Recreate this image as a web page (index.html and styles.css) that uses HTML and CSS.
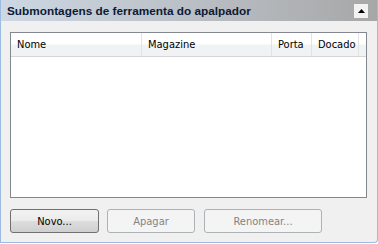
FILE: index.html
```html
<!DOCTYPE html>
<html lang="pt">
<head>
    <meta charset="UTF-8">
    <title>Submontagens de ferramenta do apalpador</title>
    <link rel="stylesheet" href="styles.css">
</head>
<body>
    <div class="panel">
        <div class="panel-head">
            <span class="panel-title">Submontagens de ferramenta do apalpador</span>
            <span class="collapse-btn">
                <svg width="7" height="4" viewBox="0 0 7 4"><polygon points="0,4 7,4 3.5,0" fill="#000"/></svg>
            </span>
        </div>
        <div class="panel-body">
            <div class="listbox">
                <div class="list-head">
                    <div class="col col-nome">Nome</div>
                    <div class="col col-mag">Magazine</div>
                    <div class="col col-porta">Porta</div>
                    <div class="col col-doc">Docado</div>
                </div>
                <div class="list-rows">
                    <!-- sem subconjuntos -->
                </div>
            </div>
            <div class="actions">
                <button class="btn btn-novo">Novo...</button>
                <button class="btn btn-apagar" disabled>Apagar</button>
                <button class="btn btn-renomear" disabled>Renomear...</button>
            </div>
        </div>
    </div>
</body>
</html>
```

FILE: styles.css
```css
body {
    margin: 0;
    width: 378px;
    height: 244px;
    background: #ffffff;
    font-family: "DejaVu Sans Condensed", "DejaVu Sans", Arial, sans-serif;
    font-size: 11px;
}
.panel {
    width: 376px;
    height: 242px;
    border-left: 1px solid #9bbbe0;
    border-right: 1px solid #9bbbe0;
    border-bottom: 1px solid #9bbbe0;
    border-bottom-right-radius: 4px;
    background: #f0f0f0;
    display: flex;
    flex-direction: column;
}
.panel-head {
    height: 21px;
    display: flex;
    align-items: center;
    justify-content: space-between;
    padding: 0 9px 0 6px;
    background: linear-gradient(to right, #cdd8e4 0%, #bcc2c9 45%, #a7a7a7 100%);
}
.panel-title {
    font-family: "Liberation Sans", Arial, sans-serif;
    font-weight: bold;
    font-size: 11.8px;
    color: #0d1a35;
}
.collapse-btn {
    width: 14px;
    height: 14px;
    background: #f2f2f2;
    display: flex;
    align-items: center;
    justify-content: center;
}
.panel-body {
    flex: 1;
    padding: 11px 10px 9px 9px;
    display: flex;
    flex-direction: column;
}
.listbox {
    height: 164px;
    border: 1px solid #828790;
    background: #ffffff;
    display: flex;
    flex-direction: column;
}
.list-head {
    height: 23px;
    display: flex;
    background: linear-gradient(#ffffff 0%, #ffffff 45%, #f1f2f4 55%, #f1f2f4 100%);
    border-bottom: 1px solid #d5d5d5;
}
.col {
    display: flex;
    align-items: center;
    padding-left: 6px;
    border-right: 1px solid #e2e3e4;
    color: #000;
}
.col-nome { width: 124px; }
.col-mag { width: 123px; }
.col-porta { width: 33px; }
.col-doc { width: 40px; }
.list-rows {
    flex: 1;
}
.actions {
    margin-top: 11px;
    display: flex;
    gap: 9px;
}
.btn {
    height: 24px;
    border: 1px solid #707070;
    border-radius: 3px;
    background: linear-gradient(#f2f2f2 0%, #ebebeb 50%, #dddddd 51%, #cfcfcf 100%);
    font-family: "DejaVu Sans Condensed", "DejaVu Sans", Arial, sans-serif;
    font-size: 11px;
    color: #000;
    padding: 0;
}
.btn:disabled {
    border-color: #adb2b5;
    background: #f4f4f4;
    color: #838383;
}
.btn-novo { width: 89px; }
.btn-apagar { width: 88px; margin-left: -1px; }
.btn-renomear { width: 118px; }
```
